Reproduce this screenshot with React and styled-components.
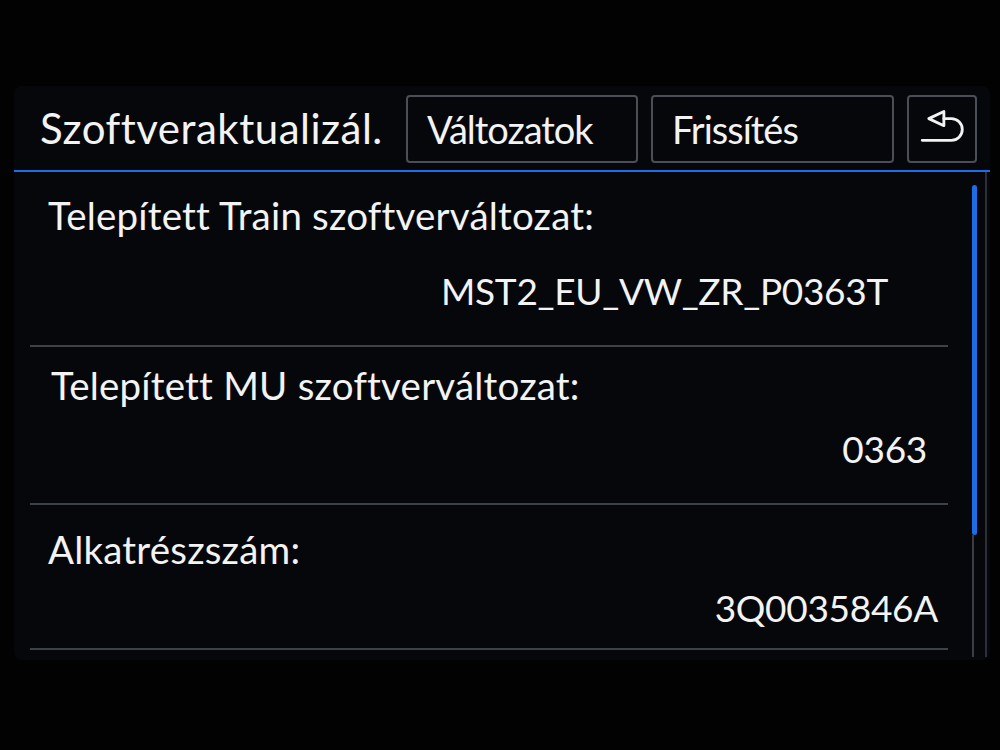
import React from 'react'
import styled, { createGlobalStyle } from 'styled-components'

const GlobalStyle = createGlobalStyle`
  html, body {
    margin: 0;
    padding: 0;
    background: #020202;
  }
  * {
    box-sizing: border-box;
  }
`

const Page = styled.div`
  width: 1000px;
  height: 750px;
  padding: 86px 10px 90px 14px;
  background: #020202;
  font-family: Lato, 'Open Sans', sans-serif;
  color: #f3f3f3;
`

const Screen = styled.div`
  height: 100%;
  display: flex;
  flex-direction: column;
  background: #05070b;
  border-radius: 8px;
  overflow: hidden;
`

const Header = styled.div`
  height: 86px;
  display: flex;
  align-items: center;
  gap: 13px;
  padding-right: 13px;
  border-bottom: 2px solid #1d6ee4;
`

const Title = styled.h1`
  width: 379px;
  margin: 0;
  padding-left: 26px;
  font-size: 42px;
  font-weight: 400;
  letter-spacing: 0.5px;
  white-space: nowrap;
`

const TabButton = styled.button`
  width: ${p => p.w}px;
  height: 68px;
  margin-top: 2px;
  display: flex;
  align-items: center;
  justify-content: ${p => p.icon ? 'center' : 'flex-start'};
  padding: 0 0 0 ${p => p.icon ? 0 : 19}px;
  background: #05070b;
  border: 2px solid #4b4f55;
  border-radius: 4px;
  color: #f3f3f3;
  font-family: Lato, 'Open Sans', sans-serif;
  font-size: 38px;
  letter-spacing: -1px;
  cursor: pointer;
`

const Body = styled.div`
  flex: 1;
  display: flex;
`

const List = styled.div`
  width: 934px;
  padding-left: 16px;
`

const Row = styled.div`
  height: ${p => p.h}px;
  padding-top: ${p => p.pad}px;
  display: flex;
  flex-direction: column;
  border-bottom: 2px solid #3d4248;
`

const Label = styled.div`
  padding-left: ${p => p.indent}px;
  font-size: 38.5px;
  line-height: 38px;
  letter-spacing: 0.2px;
  white-space: nowrap;
`

const Value = styled.div`
  margin-top: ${p => p.gap}px;
  padding-right: ${p => p.inset}px;
  text-align: right;
  font-size: 37px;
  line-height: 37px;
  letter-spacing: -0.3px;
  white-space: nowrap;
`

const ScrollArea = styled.div`
  flex: 1;
  display: flex;
  padding-bottom: 3px;
`

const Track = styled.div`
  width: 5px;
  margin-left: 24px;
  display: flex;
  flex-direction: column;
  padding-top: 13px;
`

const Thumb = styled.div`
  height: 350px;
  background: #1d6ee4;
  border-radius: 3px;
`

const TrackRest = styled.div`
  flex: 1;
  width: 2px;
  background: #3a3e44;
`

const EdgeRule = styled.div`
  width: 2px;
  margin-left: 8px;
  background: #2c3036;
`

function BackIcon() {
  return (
    <svg width="70" height="68" viewBox="0 0 70 68" fill="none" stroke="#f3f3f3" strokeWidth="3" strokeLinejoin="round" strokeLinecap="round">
      <path d="M21 23 L37 15.5 L37 30.5 Z" />
      <path d="M37 23 H45 A11.5 11.5 0 0 1 45 46 H14" />
    </svg>
  )
}

const rows = [
  { label: 'Telepített Train szoftverváltozat:', value: 'MST2_EU_VW_ZR_P0363T', h: 175, pad: 24, gap: 38, indent: 18, inset: 60 },
  { label: 'Telepített MU szoftverváltozat:', value: '0363', h: 158, pad: 19, gap: 26, indent: 21, inset: 21 },
  { label: 'Alkatrészszám:', value: '3Q0035846A', h: 145, pad: 25, gap: 21, indent: 18, inset: 10 },
]

export default function App() {
  return (
    <>
      <GlobalStyle />
      <Page>
        <Screen>
          <Header>
            <Title>Szoftveraktualizál.</Title>
            <TabButton w={232}>Változatok</TabButton>
            <TabButton w={243}>Frissítés</TabButton>
            <TabButton w={70} icon aria-label="Vissza"><BackIcon /></TabButton>
          </Header>
          <Body>
            <List>
              {rows.map(r => (
                <Row key={r.label} h={r.h} pad={r.pad}>
                  <Label indent={r.indent}>{r.label}</Label>
                  <Value gap={r.gap} inset={r.inset}>{r.value}</Value>
                </Row>
              ))}
            </List>
            <ScrollArea>
              <Track>
                <Thumb />
                <TrackRest />
              </Track>
              <EdgeRule />
            </ScrollArea>
          </Body>
        </Screen>
      </Page>
    </>
  )
}
